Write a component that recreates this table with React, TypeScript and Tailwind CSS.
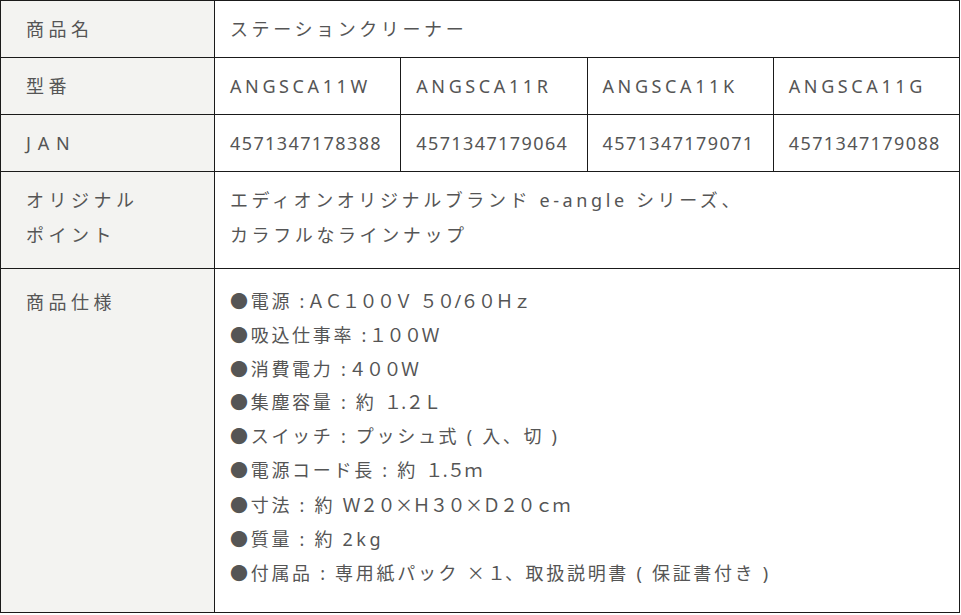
import type { ReactNode } from 'react';

// full-width latin runs sit tighter than the kana around them
const L = ({ children }: { children: ReactNode }) => <span className="tracking-[-0.5px]">{children}</span>;
const X = () => <span style={{ fontFamily: '"Noto Sans CJK JP", sans-serif' }}>×</span>;

const specs: ReactNode[] = [
  <>●電源 :<L>ＡＣ１００Ｖ</L> <L>５０/６０Ｈｚ</L></>,
  <>●吸込仕事率 :<L>１００Ｗ</L></>,
  <>●消費電力 :<L>４００Ｗ</L></>,
  <>●集塵容量 : 約 <L>１.２Ｌ</L></>,
  <>●スイッチ : プッシュ式 ( 入、切 )</>,
  <>●電源コード長 : 約 <L>１.５ｍ</L></>,
  <>●寸法 : 約 <L>Ｗ２０<X />Ｈ３０<X />Ｄ２０ｃｍ</L></>,
  <>●質量 : 約 <span className="tracking-[0.2em]">2kg</span></>,
  <>●付属品 : 専用紙パック <X /><L>１</L>、取扱説明書 ( 保証書付き )</>,
];

const models = ['ANGSCA11W', 'ANGSCA11R', 'ANGSCA11K', 'ANGSCA11G'];
const jans = ['4571347178388', '4571347179064', '4571347179071', '4571347179088'];

const th = 'border border-[#1a1a1a] bg-[#f3f3f1] pl-[25px] pr-3 text-left font-normal tracking-[0.25em]';
const td = 'border border-[#1a1a1a] bg-white px-[15px]';

export default function App() {
  return (
    <div
      className="w-[961px] h-[615px] bg-white text-[#555] text-[18px] tracking-[0.2em] overflow-hidden"
      style={{ fontFamily: '"Noto Sans", "Noto Sans CJK JP", sans-serif' }}
    >
      <table className="w-[960px] table-fixed border-collapse">
        <colgroup>
          <col className="w-[214px]" />
          <col />
          <col />
          <col />
          <col />
        </colgroup>
        <tbody>
          <tr className="h-[57px]">
            <th className={th}>商品名</th>
            <td className={td} colSpan={4}>ステーションクリーナー</td>
          </tr>
          <tr className="h-[57px]">
            <th className={th}>型番</th>
            {models.map(m => (
              <td key={m} className={td}>{m}</td>
            ))}
          </tr>
          <tr className="h-[57px]">
            <th className={`${th} tracking-[0.38em]`}>JAN</th>
            {jans.map(j => (
              <td key={j} className={`${td} tracking-[1.4px]`}>{j}</td>
            ))}
          </tr>
          <tr className="h-[97px]">
            <th className={`${th} align-top pt-[11px] leading-[35px]`}>
              オリジナル<br />ポイント
            </th>
            <td className={`${td} align-top pt-[11px] leading-[35px]`} colSpan={4}>
              エディオンオリジナルブランド e-angle シリーズ、<br />
              カラフルなラインナップ
            </td>
          </tr>
          <tr className="h-[344px]">
            <th className={`${th} align-top pt-[16px] leading-[34px]`}>商品仕様</th>
            <td className={`${td} align-top pt-[16px] pb-[8px] leading-[33.8px] tracking-[0.15em]`} colSpan={4}>
              <ul>
                {specs.map((s, i) => (
                  <li key={i}>{s}</li>
                ))}
              </ul>
            </td>
          </tr>
        </tbody>
      </table>
    </div>
  );
}
